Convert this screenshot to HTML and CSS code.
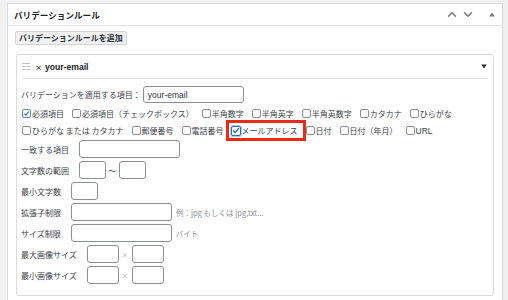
FILE: index.html
```html
<!DOCTYPE html>
<html lang="ja">
<head>
    <meta charset="UTF-8">
    <meta name="viewport" content="width=device-width, initial-scale=1.0">
    <title>バリデーションルール</title>
    <link rel="stylesheet" href="styles.css">
</head>
<body>
    <div class="postbox">
        <div class="postbox-header">
            <h2>バリデーションルール</h2>
            <div class="handle-actions">
                <svg class="chev" width="10" height="7" viewBox="0 0 10 7"><path d="M1.2 5.6 L5 1.8 L8.8 5.6" fill="none" stroke="#787c82" stroke-width="1.5"/></svg>
                <svg class="chev" width="10" height="7" viewBox="0 0 10 7"><path d="M1.2 1.4 L5 5.2 L8.8 1.4" fill="none" stroke="#787c82" stroke-width="1.5"/></svg>
                <svg class="toggle" width="6" height="5" viewBox="0 0 6 5"><polygon points="3,0.5 5.8,4.5 0.2,4.5" fill="#787c82"/></svg>
            </div>
        </div>

        <div class="inside">
            <button class="add-button">バリデーションルールを追加</button>

            <div class="rule">
                <div class="rule-header">
                    <svg class="drag" width="8" height="7" viewBox="0 0 8 7">
                        <rect x="0" y="0" width="8" height="1" fill="#c3c4c7"/>
                        <rect x="0" y="3" width="8" height="1" fill="#c3c4c7"/>
                        <rect x="0" y="6" width="8" height="1" fill="#c3c4c7"/>
                    </svg>
                    <span class="rule-remove">×</span>
                    <span class="rule-title">your-email</span>
                    <svg class="rule-toggle" width="6" height="5" viewBox="0 0 6 5"><polygon points="0.2,0.5 5.8,0.5 3,4.5" fill="#2c3338"/></svg>
                </div>

                <div class="rule-body">
                    <div class="target-row">
                        <span class="label">バリデーションを適用する項目：</span>
                        <input class="text-input target" type="text" value="your-email">
                    </div>

                    <div class="check-row">
                        <label class="check"><span class="box checked"><svg width="9" height="9" viewBox="0 0 9 9"><path d="M1.6 4.6 L3.7 6.7 L7.6 1.9" fill="none" stroke="#2271b1" stroke-width="1.4"/></svg></span>必須項目</label>
                        <label class="check"><span class="box"></span>必須項目（チェックボックス）</label>
                        <label class="check"><span class="box"></span>半角数字</label>
                        <label class="check"><span class="box"></span>半角英字</label>
                        <label class="check"><span class="box"></span>半角英数字</label>
                        <label class="check"><span class="box"></span>カタカナ</label>
                        <label class="check"><span class="box"></span>ひらがな</label>
                    </div>
                    <div class="check-row">
                        <label class="check"><span class="box"></span>ひらがな または カタカナ</label>
                        <label class="check"><span class="box"></span>郵便番号</label>
                        <label class="check"><span class="box"></span>電話番号</label>
                        <label class="check highlight"><span class="box checked focus"><svg width="9" height="9" viewBox="0 0 9 9"><path d="M1.4 4.6 L3.6 6.8 L7.8 1.8" fill="none" stroke="#2271b1" stroke-width="1.5"/></svg></span>メールアドレス</label>
                        <label class="check"><span class="box"></span>日付</label>
                        <label class="check"><span class="box"></span>日付（年月）</label>
                        <label class="check"><span class="box"></span><span class="latin">URL</span></label>
                    </div>

                    <div class="fields">
                        <div class="field">
                            <span class="label">一致する項目</span>
                            <input class="text-input w-long" type="text">
                        </div>
                        <div class="field">
                            <span class="label">文字数の範囲</span>
                            <input class="text-input w-short" type="text">
                            <span class="sep">〜</span>
                            <input class="text-input w-short" type="text">
                        </div>
                        <div class="field">
                            <span class="label">最小文字数</span>
                            <input class="text-input w-short" type="text">
                        </div>
                        <div class="field">
                            <span class="label">拡張子制限</span>
                            <input class="text-input w-long" type="text">
                            <span class="hint">例：jpg もしくは jpg,txt...</span>
                        </div>
                        <div class="field">
                            <span class="label">サイズ制限</span>
                            <input class="text-input w-long" type="text">
                            <span class="hint">バイト</span>
                        </div>
                        <div class="field">
                            <span class="label">最大画像サイズ</span>
                            <input class="text-input w-size" type="text">
                            <span class="times">×</span>
                            <input class="text-input w-size" type="text">
                        </div>
                        <div class="field">
                            <span class="label">最小画像サイズ</span>
                            <input class="text-input w-size" type="text">
                            <span class="times">×</span>
                            <input class="text-input w-size" type="text">
                        </div>
                    </div>
                </div>
            </div>
        </div>
    </div>
</body>
</html>
```

FILE: styles.css
```css
* {
    box-sizing: border-box;
}

body {
    margin: 0;
    background-color: #f0f0f1;
    font-family: "Noto Sans CJK JP", "Noto Sans", sans-serif;
    font-size: 8px;
    color: #3c434a;
    height: 300px;
    overflow: hidden;
}

.postbox {
    margin: 3px 5px 0 7px;
    background-color: #fff;
    border: 1px solid #dcdcde;
    border-bottom: none;
    height: 297px;
}

.postbox-header {
    display: flex;
    align-items: center;
    justify-content: space-between;
    height: 22px;
    padding: 0 7px 0 6px;
    border-bottom: 1px solid #e4e4e6;
}

.postbox-header h2 {
    margin: 0;
    font-size: 8.6px;
    font-weight: bold;
    color: #1d2327;
}

.handle-actions {
    display: flex;
    align-items: center;
    gap: 6px;
}

.handle-actions .toggle {
    margin-left: 10px;
}

.inside {
    padding: 5px 8px 0 8px;
}

.add-button {
    display: block;
    height: 14px;
    margin-left: -1px;
    padding: 0 3px;
    font-family: inherit;
    font-size: 8px;
    font-weight: bold;
    line-height: 12px;
    color: #2c3338;
    background-color: #f0f0f1;
    border: 1px solid #d4d4d6;
    border-radius: 2px;
}

.rule {
    margin-top: 9px;
    border: 1px solid #dcdcde;
    border-radius: 3px;
    height: 242px;
}

.rule-header {
    display: flex;
    align-items: center;
    height: 24px;
    margin: 0 5px;
    border-bottom: 1px solid #e4e4e6;
}

.rule-remove {
    margin-left: 5px;
    font-size: 7px;
    font-weight: bold;
    color: #2c3338;
}

.rule-title {
    margin-left: 3px;
    font-family: "Liberation Sans", Arial, sans-serif;
    font-size: 8.6px;
    font-weight: bold;
    color: #1d2327;
}

.rule-toggle {
    margin-left: auto;
    margin-right: 1px;
}

.rule-body {
    padding: 7px 4px 0 4px;
}

.target-row {
    display: flex;
    align-items: center;
    height: 17px;
}

.text-input {
    height: 18px;
    padding: 0 4px;
    border: 1px solid #8c8f94;
    border-radius: 3px;
    background-color: #fff;
    font-family: "Liberation Sans", Arial, sans-serif;
    font-size: 8.5px;
    color: #2c3338;
    outline: none;
}

.target {
    width: 101px;
    height: 17px;
    margin-left: 2px;
}

.check-row {
    display: flex;
    align-items: center;
    height: 17px;
    padding-left: 1px;
    white-space: nowrap;
}

.target-row + .check-row {
    margin-top: 2px;
}

.check {
    position: relative;
    display: flex;
    align-items: center;
    margin-right: 8px;
}

.box {
    display: inline-flex;
    align-items: center;
    justify-content: center;
    width: 9px;
    height: 9px;
    margin-right: 1px;
    border: 1px solid #8c8f94;
    border-radius: 2px;
    background-color: #fff;
}

.box.checked {
    border-color: #5a8fc0;
}

.box.focus {
    width: 10px;
    height: 10px;
    border-color: #2271b1;
    box-shadow: 0 0 0 1px rgba(34, 113, 177, 0.35);
}

.highlight {
    margin-left: -1px;
}

.highlight::after {
    content: "";
    position: absolute;
    top: -5px;
    bottom: -5px;
    left: -5px;
    right: -8px;
    border: 3px solid #eb2a14;
}

.latin {
    font-family: "Liberation Sans", Arial, sans-serif;
    font-size: 8.5px;
}

.fields {
    display: flex;
    flex-direction: column;
    gap: 3px;
    margin-top: 1px;
}

.field {
    display: flex;
    align-items: center;
    height: 18px;
}

.label {
    margin-right: 10px;
    white-space: nowrap;
}

.target-row .label {
    margin-right: 0;
}

.w-long {
    width: 101px;
}

.w-short {
    width: 27px;
}

.w-size {
    width: 32px;
}

.sep {
    margin: 0 3px 0 2px;
}

.times {
    margin: 0 4px 0 3px;
    font-size: 6px;
    color: #8c8f94;
}

.hint {
    margin-left: 4px;
    font-size: 7.5px;
    color: #8c8f94;
}
```
